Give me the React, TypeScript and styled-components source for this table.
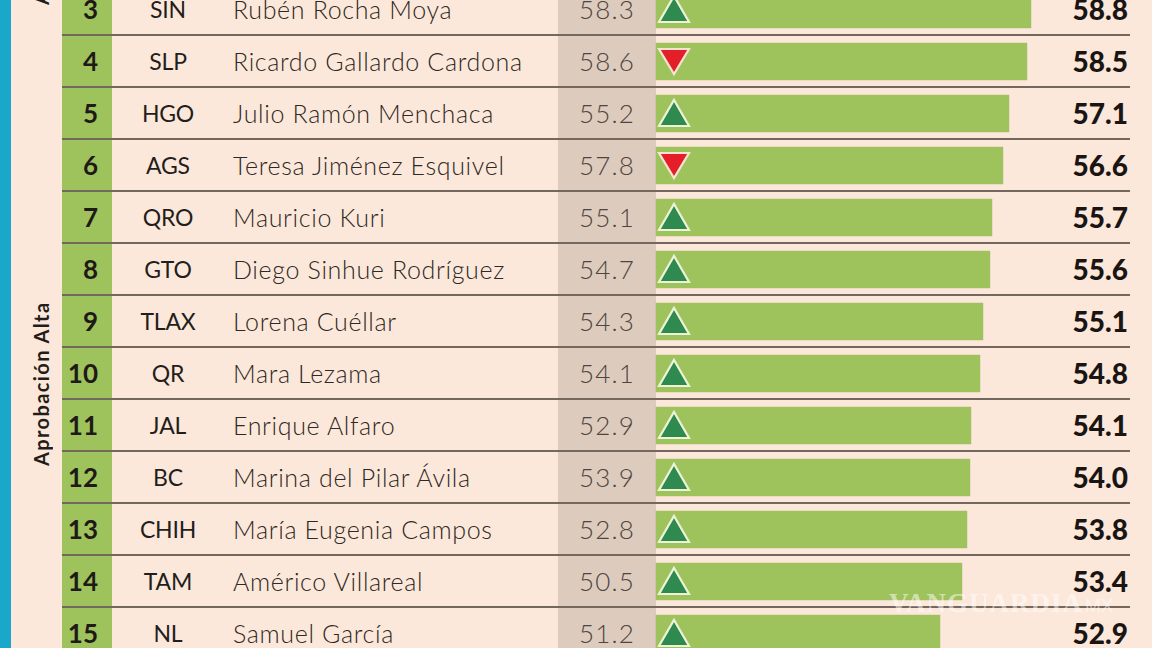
import React from "react";
import styled, { createGlobalStyle } from "styled-components";

const Global = createGlobalStyle`
  html, body { margin: 0; padding: 0; }
  body { background: #fce8da; overflow: hidden; }
  #root { width: 1152px; height: 648px; overflow: hidden; }
`;

type Row = {
  rank: number;
  st: string;
  name: string;
  prev: string;
  up: boolean;
  bar: number;
  val: string;
};

const rows: Row[] = [
  { rank: 3, st: "SIN", name: "Rubén Rocha Moya", prev: "58.3", up: true, bar: 375, val: "58.8" },
  { rank: 4, st: "SLP", name: "Ricardo Gallardo Cardona", prev: "58.6", up: false, bar: 371, val: "58.5" },
  { rank: 5, st: "HGO", name: "Julio Ramón Menchaca", prev: "55.2", up: true, bar: 353, val: "57.1" },
  { rank: 6, st: "AGS", name: "Teresa Jiménez Esquivel", prev: "57.8", up: false, bar: 347, val: "56.6" },
  { rank: 7, st: "QRO", name: "Mauricio Kuri", prev: "55.1", up: true, bar: 336, val: "55.7" },
  { rank: 8, st: "GTO", name: "Diego Sinhue Rodríguez", prev: "54.7", up: true, bar: 334, val: "55.6" },
  { rank: 9, st: "TLAX", name: "Lorena Cuéllar", prev: "54.3", up: true, bar: 327, val: "55.1" },
  { rank: 10, st: "QR", name: "Mara Lezama", prev: "54.1", up: true, bar: 324, val: "54.8" },
  { rank: 11, st: "JAL", name: "Enrique Alfaro", prev: "52.9", up: true, bar: 315, val: "54.1" },
  { rank: 12, st: "BC", name: "Marina del Pilar Ávila", prev: "53.9", up: true, bar: 314, val: "54.0" },
  { rank: 13, st: "CHIH", name: "María Eugenia Campos", prev: "52.8", up: true, bar: 311, val: "53.8" },
  { rank: 14, st: "TAM", name: "Américo Villareal", prev: "50.5", up: true, bar: 306, val: "53.4" },
  { rank: 15, st: "NL", name: "Samuel García", prev: "51.2", up: true, bar: 284, val: "52.9" },
];

const Page = styled.div`
  position: relative;
  display: flex;
  align-items: flex-start;
  width: 1152px;
  height: 648px;
  overflow: hidden;
  background: #fce8da;
  font-family: "Lato", "Noto Sans", sans-serif;
  color: #2b2522;
`;

const BlueStripe = styled.div`
  width: 11px;
  height: 648px;
  flex: none;
  background: #1aa8ca;
`;

const LabelColumn = styled.div`
  width: 51px;
  height: 648px;
  flex: none;
  display: flex;
  flex-direction: column;
  align-items: center;
`;

const SideLabel = styled.div<{ $top: number; $h: number }>`
  flex: none;
  margin-top: ${(p) => p.$top}px;
  height: ${(p) => p.$h}px;
  writing-mode: vertical-rl;
  transform: rotate(180deg);
  font-weight: 700;
  font-size: 20px;
  letter-spacing: 1.4px;
  line-height: 1;
  color: #231d1a;
  white-space: nowrap;
  margin-left: 8px;
`;

const Table = styled.div`
  width: 1068px;
  flex: none;
  margin-top: -16px;
  display: flex;
  flex-direction: column;
`;

const RowBox = styled.div`
  flex: none;
  display: grid;
  grid-template-columns: 50px 112px 334px 98px 390px 84px;
  height: 52px;
  box-sizing: border-box;
  border-bottom: 2px solid #73675e;
`;

const RankCell = styled.div`
  background: #9fc35c;
  display: flex;
  align-items: center;
  justify-content: flex-end;
  padding-right: 14px;
  font-weight: 700;
  font-size: 26px;
  color: #1f1a17;
`;

const StateCell = styled.div`
  display: flex;
  align-items: center;
  justify-content: center;
  font-size: 23px;
  font-weight: 400;
  color: #231e1b;
  letter-spacing: -0.2px;
`;

const NameCell = styled.div`
  display: flex;
  align-items: center;
  padding-left: 9px;
  font-size: 25px;
  font-weight: 300;
  letter-spacing: 0.65px;
  color: #2f2824;
  white-space: nowrap;
`;

const PrevCell = styled.div`
  background: #ddcbbd;
  display: flex;
  align-items: center;
  justify-content: flex-end;
  padding-right: 21px;
  font-size: 26px;
  font-weight: 300;
  letter-spacing: 1.2px;
  color: #4e4540;
`;

const BarCell = styled.div`
  position: relative;
  display: flex;
  align-items: center;
`;

const Bar = styled.div`
  height: 37px;
  background: #9fc35c;
  box-shadow: 0 0 1px #8aa84d;
`;

const Arrow = styled.svg`
  position: absolute;
  left: 0px;
  top: 50%;
  transform: translateY(-50%);
`;

const ValueCell = styled.div`
  display: flex;
  align-items: center;
  justify-content: flex-end;
  padding-right: 2px;
  font-size: 28px;
  font-weight: 900;
  color: #1a1512;
`;

const Watermark = styled.div`
  position: absolute;
  left: 889px;
  top: 588px;
  display: flex;
  align-items: baseline;
  gap: 2px;
  color: rgba(255, 255, 255, 0.5);
  font-family: "Liberation Serif", serif;
  pointer-events: none;
`;

const WmMain = styled.span`
  font-size: 27px;
  font-weight: 700;
  letter-spacing: 1px;
`;

const WmSub = styled.span`
  font-size: 19px;
  font-family: "Liberation Sans", sans-serif;
  font-weight: 300;
`;

function Triangle({ up }: { up: boolean }) {
  return (
    <Arrow width="36" height="32" viewBox="0 0 36 32">
      {up ? (
        <polygon points="18,3 33,29 3,29" fill="#2e8a4f" stroke="#eef3d8" strokeWidth="2.2" />
      ) : (
        <polygon points="3,4 33,4 18,29" fill="#e41f29" stroke="#f6e4d0" strokeWidth="2.2" />
      )}
    </Arrow>
  );
}

export default function App() {
  return (
    <>
      <Global />
      <Page>
        <BlueStripe />
        <LabelColumn>
          <SideLabel $top={-200} $h={205}>Aprobación Muy Alta</SideLabel>
          <SideLabel $top={295} $h={166}>Aprobación Alta</SideLabel>
        </LabelColumn>
        <Table>
          {rows.map((r) => (
            <RowBox key={r.rank}>
              <RankCell>{r.rank}</RankCell>
              <StateCell>{r.st}</StateCell>
              <NameCell>{r.name}</NameCell>
              <PrevCell>{r.prev}</PrevCell>
              <BarCell>
                <Bar style={{ width: r.bar }} />
                <Triangle up={r.up} />
              </BarCell>
              <ValueCell>{r.val}</ValueCell>
            </RowBox>
          ))}
        </Table>
        <Watermark>
          <WmMain>VANGUARDIA</WmMain>
          <WmSub>MX</WmSub>
        </Watermark>
      </Page>
    </>
  );
}
